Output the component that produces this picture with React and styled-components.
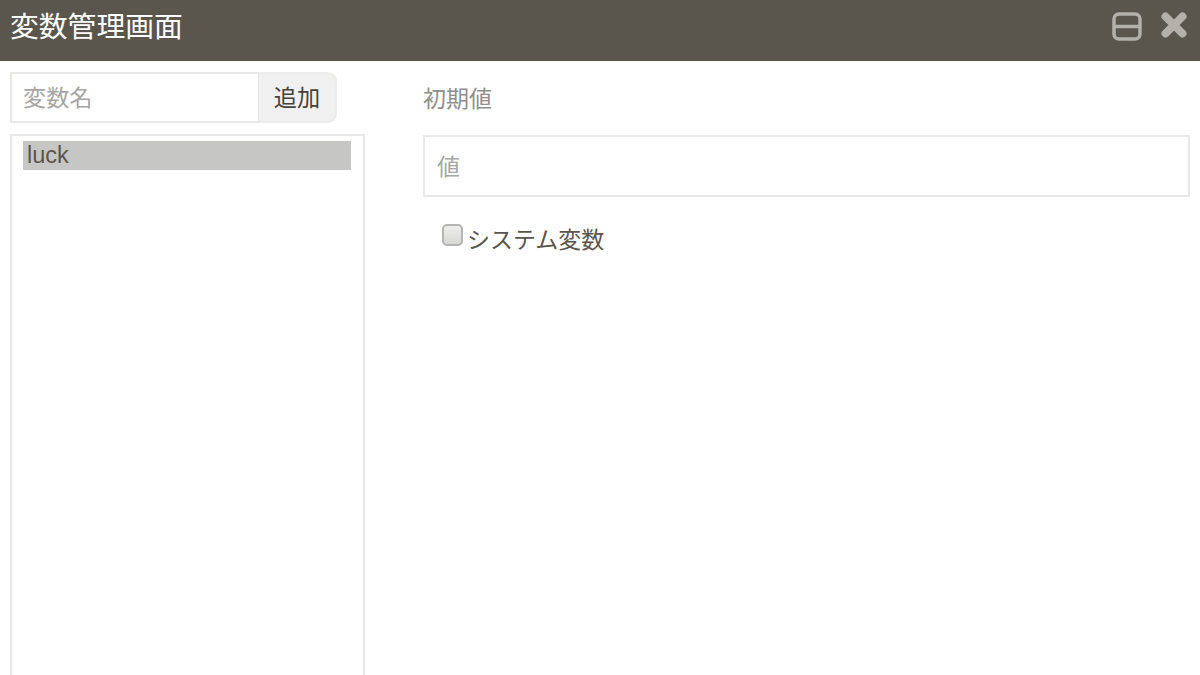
import React from "react";
import styled, { createGlobalStyle } from "styled-components";

const GlobalStyle = createGlobalStyle`
  html, body {
    margin: 0;
    padding: 0;
    background: #fff;
    height: 100%;
    overflow: hidden;
  }
  * {
    box-sizing: border-box;
  }
  body {
    font-family: "Liberation Sans", "Noto Sans CJK JP", sans-serif;
  }
`;

const Page = styled.div`
  width: 1200px;
  height: 675px;
  display: flex;
  flex-direction: column;
  overflow: hidden;
`;

const TitleBar = styled.header`
  height: 61px;
  flex: none;
  background: #5a564d;
  display: flex;
  align-items: center;
  justify-content: space-between;
  padding: 0 13px 0 10px;
`;

const Title = styled.h1`
  margin: 0;
  font-size: 28.8px;
  font-weight: 400;
  color: #fff;
  line-height: 1;
  padding-bottom: 6px;
`;

const Icons = styled.div`
  display: flex;
  align-items: flex-start;
  gap: 19px;
  padding-bottom: 8px;
`;

const Body = styled.div`
  flex: 1;
  min-height: 0;
  display: flex;
  padding: 11px 10px 0;
`;

const LeftColumn = styled.div`
  width: 355px;
  flex: none;
  display: flex;
  flex-direction: column;
  gap: 11px;
`;

const InputGroup = styled.div`
  width: 327px;
  height: 51px;
  flex: none;
  display: flex;
`;

const NameInput = styled.input`
  flex: 1;
  min-width: 0;
  border: 2px solid #e8e8e6;
  border-right: 1px solid #e4e4e2;
  padding: 1px 11px 0;
  font: inherit;
  font-size: 23.2px;
  background: #fff;
  outline: none;

  &::placeholder {
    color: #a6a6a4;
    opacity: 1;
  }
`;

const AddButton = styled.button`
  width: 78px;
  flex: none;
  border: 2px solid #ececea;
  border-left: 0;
  border-radius: 0 9px 9px 0;
  background: #f0f0f0;
  color: #45433e;
  font: inherit;
  font-size: 23.2px;
  padding: 0 0 3px;
`;

const ListBox = styled.div`
  flex: 1;
  min-height: 0;
  border: 2px solid #e8e8e6;
  border-bottom: 0;
  padding: 5px 12px 0 11px;
`;

const ListItem = styled.div`
  height: 29px;
  background: ${(p) => (p.$selected ? "#c6c6c4" : "transparent")};
  color: #5a564d;
  font-size: 23.5px;
  line-height: 29px;
  padding-left: 4px;
`;

const RightColumn = styled.div`
  flex: 1;
  min-width: 0;
  margin-left: 58px;
  padding-top: 12px;
  display: flex;
  flex-direction: column;
`;

const FieldLabel = styled.label`
  font-size: 23px;
  line-height: 30px;
  color: #8f8f8c;
  margin-bottom: 19px;
  height: 32px;
`;

const ValueInput = styled.input`
  width: 100%;
  height: 62px;
  flex: none;
  border: 2px solid #e8e8e6;
  padding: 2px 12px 0;
  font: inherit;
  font-size: 23px;
  outline: none;

  &::placeholder {
    color: #a6a6a4;
    opacity: 1;
  }
`;

const CheckRow = styled.label`
  display: flex;
  align-items: center;
  margin: 24px 0 0 19px;
  height: 34px;
  color: #5a564d;
  font-size: 23px;
`;

const CheckBox = styled.input`
  appearance: none;
  width: 21px;
  height: 22px;
  margin: 0 4px 7px 0;
  border: 2px solid #b4b4b0;
  border-radius: 5px;
  background: linear-gradient(#eeeeec, #d8d8d4);
`;

const MinimizeIcon = () => (
  <svg width="30" height="29" viewBox="0 0 30 29" fill="none" stroke="#b3b1aa" strokeWidth="3.5">
    <rect x="2" y="2" width="26" height="25" rx="5" />
    <path d="M3 14.5H27" />
  </svg>
);

const CloseIcon = () => (
  <svg width="26" height="26" viewBox="0 0 26 26" fill="none" stroke="#b3b1aa" strokeWidth="8" strokeLinecap="round">
    <path d="M4.5 4.5L21.5 21.5M21.5 4.5L4.5 21.5" />
  </svg>
);

export default function App() {
  return (
    <Page>
      <GlobalStyle />
      <TitleBar>
        <Title>変数管理画面</Title>
        <Icons>
          <MinimizeIcon />
          <CloseIcon />
        </Icons>
      </TitleBar>
      <Body>
        <LeftColumn>
          <InputGroup>
            <NameInput placeholder="変数名" />
            <AddButton>追加</AddButton>
          </InputGroup>
          <ListBox>
            <ListItem $selected>luck</ListItem>
          </ListBox>
        </LeftColumn>
        <RightColumn>
          <FieldLabel>初期値</FieldLabel>
          <ValueInput placeholder="値" />
          <CheckRow>
            <CheckBox type="checkbox" />
            システム変数
          </CheckRow>
        </RightColumn>
      </Body>
    </Page>
  );
}
